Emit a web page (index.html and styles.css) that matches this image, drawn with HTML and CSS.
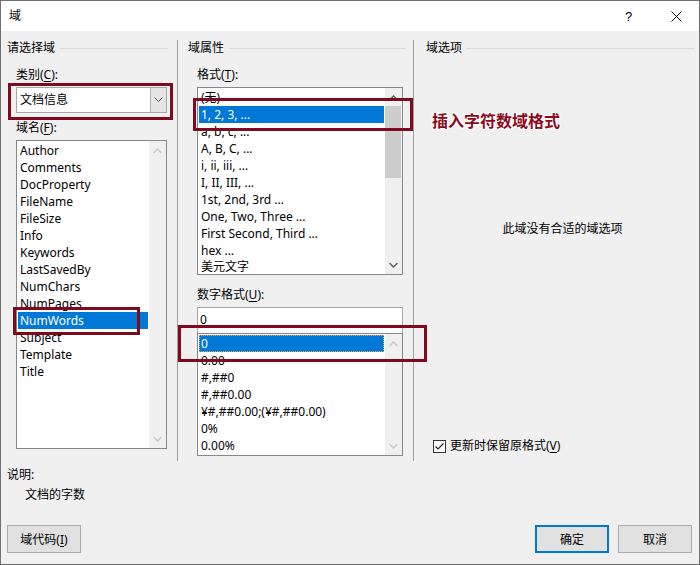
FILE: index.html
```html
<!DOCTYPE html>
<html lang="zh-CN">
<head>
<meta charset="utf-8">
<title>域</title>
<link rel="stylesheet" href="styles.css">
</head>
<body>
<div class="window">
  <div class="titlebar">
    <span class="title">域</span>
    <div class="tb-buttons">
      <div class="tb-btn help">?</div>
      <div class="tb-btn close">
        <svg width="11" height="11" viewBox="0 0 11 11"><path d="M0.5 0.5 L10.5 10.5 M10.5 0.5 L0.5 10.5" stroke="#000" stroke-width="1" fill="none"/></svg>
      </div>
    </div>
  </div>

  <div class="main">
    <div class="col col-left">
      <div class="group-head"><span>请选择域</span><div class="rule"></div></div>
      <div class="label ind">类别(<u>C</u>):</div>
      <div class="combo ind">
        <div class="combo-text">文档信息</div>
        <div class="combo-btn">
          <svg width="9" height="6" viewBox="0 0 9 6"><path d="M0.5 0.5 L4.5 4.5 L8.5 0.5" stroke="#555" stroke-width="1" fill="none"/></svg>
        </div>
      </div>
      <div class="label ind lbl-names">域名(<u>F</u>):</div>
      <div class="listbox ind names">
        <div class="items">
          <div class="item">Author</div>
          <div class="item">Comments</div>
          <div class="item">DocProperty</div>
          <div class="item">FileName</div>
          <div class="item">FileSize</div>
          <div class="item">Info</div>
          <div class="item">Keywords</div>
          <div class="item">LastSavedBy</div>
          <div class="item">NumChars</div>
          <div class="item">NumPages</div>
          <div class="item sel">NumWords</div>
          <div class="item">Subject</div>
          <div class="item">Template</div>
          <div class="item">Title</div>
        </div>
        <div class="vscroll">
          <div class="arrow"><svg width="9" height="6" viewBox="0 0 9 6"><path d="M0.5 5 L4.5 1 L8.5 5" stroke="#c8c8c8" stroke-width="1.5" fill="none"/></svg></div>
          <div class="track"></div>
          <div class="arrow"><svg width="9" height="6" viewBox="0 0 9 6"><path d="M0.5 1 L4.5 5 L8.5 1" stroke="#c8c8c8" stroke-width="1.5" fill="none"/></svg></div>
        </div>
      </div>
    </div>

    <div class="col col-mid">
      <div class="group-head"><span>域属性</span><div class="rule"></div></div>
      <div class="label ind">格式(<u>T</u>):</div>
      <div class="listbox ind formats">
        <div class="items">
          <div class="item">(无)</div>
          <div class="item sel">1, 2, 3, ...</div>
          <div class="item">a, b, c, ...</div>
          <div class="item">A, B, C, ...</div>
          <div class="item">i, ii, iii, ...</div>
          <div class="item">I, II, III, ...</div>
          <div class="item">1st, 2nd, 3rd ...</div>
          <div class="item">One, Two, Three ...</div>
          <div class="item">First Second, Third ...</div>
          <div class="item">hex ...</div>
          <div class="item last">美元文字</div>
        </div>
        <div class="vscroll">
          <div class="arrow"><svg width="9" height="6" viewBox="0 0 9 6"><path d="M0.5 5 L4.5 1 L8.5 5" stroke="#606060" stroke-width="1.5" fill="none"/></svg></div>
          <div class="track"><div class="thumb"></div></div>
          <div class="arrow"><svg width="9" height="6" viewBox="0 0 9 6"><path d="M0.5 1 L4.5 5 L8.5 1" stroke="#606060" stroke-width="1.5" fill="none"/></svg></div>
        </div>
      </div>
      <div class="label ind lbl-num">数字格式(<u>U</u>):</div>
      <div class="textbox ind">0</div>
      <div class="listbox ind numbers">
        <div class="items">
          <div class="item sel focus">0</div>
          <div class="item">0.00</div>
          <div class="item">#,##0</div>
          <div class="item">#,##0.00</div>
          <div class="item">¥#,##0.00;(¥#,##0.00)</div>
          <div class="item">0%</div>
          <div class="item">0.00%</div>
        </div>
        <div class="vscroll">
          <div class="arrow"><svg width="9" height="6" viewBox="0 0 9 6"><path d="M0.5 5 L4.5 1 L8.5 5" stroke="#c8c8c8" stroke-width="1.5" fill="none"/></svg></div>
          <div class="track"></div>
          <div class="arrow"><svg width="9" height="6" viewBox="0 0 9 6"><path d="M0.5 1 L4.5 5 L8.5 1" stroke="#c8c8c8" stroke-width="1.5" fill="none"/></svg></div>
        </div>
      </div>
    </div>

    <div class="col col-right">
      <div class="group-head"><span>域选项</span><div class="rule"></div></div>
      <div class="no-options">此域没有合适的域选项</div>
      <div class="check-row">
        <div class="checkbox">
          <svg width="11" height="11" viewBox="0 0 11 11"><path d="M1.5 5.5 L4 8 L9.5 2.5" stroke="#222" stroke-width="1.2" fill="none"/></svg>
        </div>
        <span>更新时保留原格式(<u>V</u>)</span>
      </div>
    </div>
  </div>

  <div class="desc">
    <div class="desc-title">说明:</div>
    <div class="desc-text">文档的字数</div>
  </div>

  <div class="footer">
    <div class="btn">域代码(<u>I</u>)</div>
    <div class="spacer"></div>
    <div class="btn default">确定</div>
    <div class="btn">取消</div>
  </div>

  <div class="mark mark-combo"></div>
  <div class="mark mark-names"></div>
  <div class="mark mark-formats"></div>
  <div class="mark mark-numbers"></div>
  <div class="note">插入字符数域格式</div>
</div>
</body>
</html>
```

FILE: styles.css
```css
* { box-sizing: border-box; }

body {
  margin: 0;
  background: #f0f0f0;
}

.window {
  position: relative;
  width: 700px;
  height: 565px;
  border: 1px solid #707070;
  background: #f0f0f0;
  font-family: "Noto Sans", "Noto Sans CJK SC", sans-serif;
  font-size: 12px;
  color: #000;
  display: flex;
  flex-direction: column;
}

u { text-decoration: underline; text-underline-offset: 2px; }

/* title bar */
.titlebar {
  height: 30px;
  background: #fff;
  display: flex;
  align-items: center;
  padding-left: 8px;
  flex: none;
}
.title { font-size: 12px; line-height: 16px; }
.tb-buttons { margin-left: auto; display: flex; height: 30px; }
.tb-btn {
  width: 46px;
  height: 30px;
  display: flex;
  align-items: center;
  justify-content: center;
}
.tb-btn.help { font-size: 13px; font-family: "Liberation Sans", sans-serif; padding-right: 3px; }

/* columns */
.main {
  display: flex;
  height: 430px;
  padding-top: 9px;
  flex: none;
}
.col {
  display: flex;
  flex-direction: column;
  height: 421px;
}
.col-left { width: 177px; border-right: 1px solid #a0a0a0; padding-left: 6px; }
.col-mid { width: 236px; border-right: 1px solid #a0a0a0; padding-left: 10px; }
.col-right { flex: 1; padding-left: 12px; }

.group-head {
  display: flex;
  align-items: center;
  height: 16px;
  line-height: 16px;
}
.group-head .rule { flex: 1; height: 1px; background: #dcdcdc; margin-left: 5px; }
.col-left .rule { margin-right: 9px; }
.col-mid .rule { margin-right: 7px; }
.col-right .rule { margin-left: 4px; margin-right: 4px; }

.label { line-height: 16px; height: 16px; margin-top: 11px; }
.ind { margin-left: 9px; }
.lbl-names { margin-top: 7px; }
.lbl-num { margin-top: 12px; }

/* combobox */
.combo {
  width: 151px;
  height: 26px;
  margin-top: 4px;
  border: 1px solid #a8a8a8;
  background: #fff;
  display: flex;
}
.combo-text { flex: 1; padding-left: 3px; line-height: 24px; }
.combo-btn {
  width: 16px;
  background: #e5e5e5;
  border-left: 1px solid #b4b4b4;
  display: flex;
  align-items: center;
  justify-content: center;
}

/* listbox */
.listbox {
  display: flex;
  border: 1px solid #828790;
  background: #fff;
  margin-top: 4px;
  overflow: hidden;
}
.listbox .items { flex: 1; padding: 1px; overflow: hidden; min-width: 0; }
.item {
  height: 17px;
  line-height: 17px;
  padding-left: 2px;
  white-space: nowrap;
}
.item.last { height: 15px; line-height: 16px; }
.item.sel { background: #0078d7; color: #fff; }
.item.focus { outline: 1px dotted #f3a54a; outline-offset: -1px; }

.names { width: 151px; height: 309px; }
.formats { width: 206px; height: 188px; }
.numbers { width: 206px; height: 123px; margin-top: 0; }

.vscroll {
  width: 17px;
  background: #f0f0f0;
  display: flex;
  flex-direction: column;
  flex: none;
  padding: 1px 0;
}
.vscroll .arrow {
  height: 17px;
  display: flex;
  align-items: center;
  justify-content: center;
  flex: none;
}
.vscroll .track { flex: 1; padding: 0 1px 0 0; }
.thumb { height: 72px; background: #cdcdcd; }

.textbox {
  width: 206px;
  height: 26px;
  margin-top: 4px;
  border: 1px solid #a8a8a8;
  border-bottom: none;
  background: #fff;
  padding-left: 2px;
  line-height: 24px;
}

/* right column */
.no-options {
  margin-top: 165px;
  text-align: center;
  line-height: 16px;
}
.check-row {
  margin-top: 201px;
  margin-left: 7px;
  display: flex;
  align-items: center;
  line-height: 16px;
  gap: 4px;
}
.checkbox {
  width: 13px;
  height: 13px;
  border: 1px solid #333;
  background: #fff;
  display: flex;
  align-items: center;
  justify-content: center;
}

/* description */
.desc { padding-left: 6px; margin-top: 6px; }
.desc-title { line-height: 16px; }
.desc-text { line-height: 16px; margin-top: 4px; margin-left: 18px; }

/* footer */
.footer {
  display: flex;
  margin-top: 22px;
  padding: 0 7px 0 6px;
}
.spacer { flex: 1; }
.btn {
  width: 74px;
  height: 28px;
  background: #e1e1e1;
  border: 1px solid #adadad;
  display: flex;
  align-items: center;
  justify-content: center;
}
.btn + .btn { margin-left: 9px; }
.btn.default { border: 2px solid #0078d7; }

/* annotations */
.mark {
  position: absolute;
  border: 3px solid #7d0a1f;
}
.mark-combo { left: 7px; top: 82px; width: 165px; height: 37px; }
.mark-names { left: 12px; top: 306px; width: 127px; height: 28px; }
.mark-formats { left: 192px; top: 97px; width: 220px; height: 33px; }
.mark-numbers { left: 177px; top: 324px; width: 249px; height: 37px; }

.note {
  position: absolute;
  left: 431px;
  top: 111px;
  font-size: 16px;
  font-weight: bold;
  color: #8b0b1c;
  line-height: 18px;
  text-shadow: 0 0 1px #fff, 1px 1px 0 #fff, -1px -1px 0 #fff, 1px -1px 0 #fff, -1px 1px 0 #fff;
}
```
